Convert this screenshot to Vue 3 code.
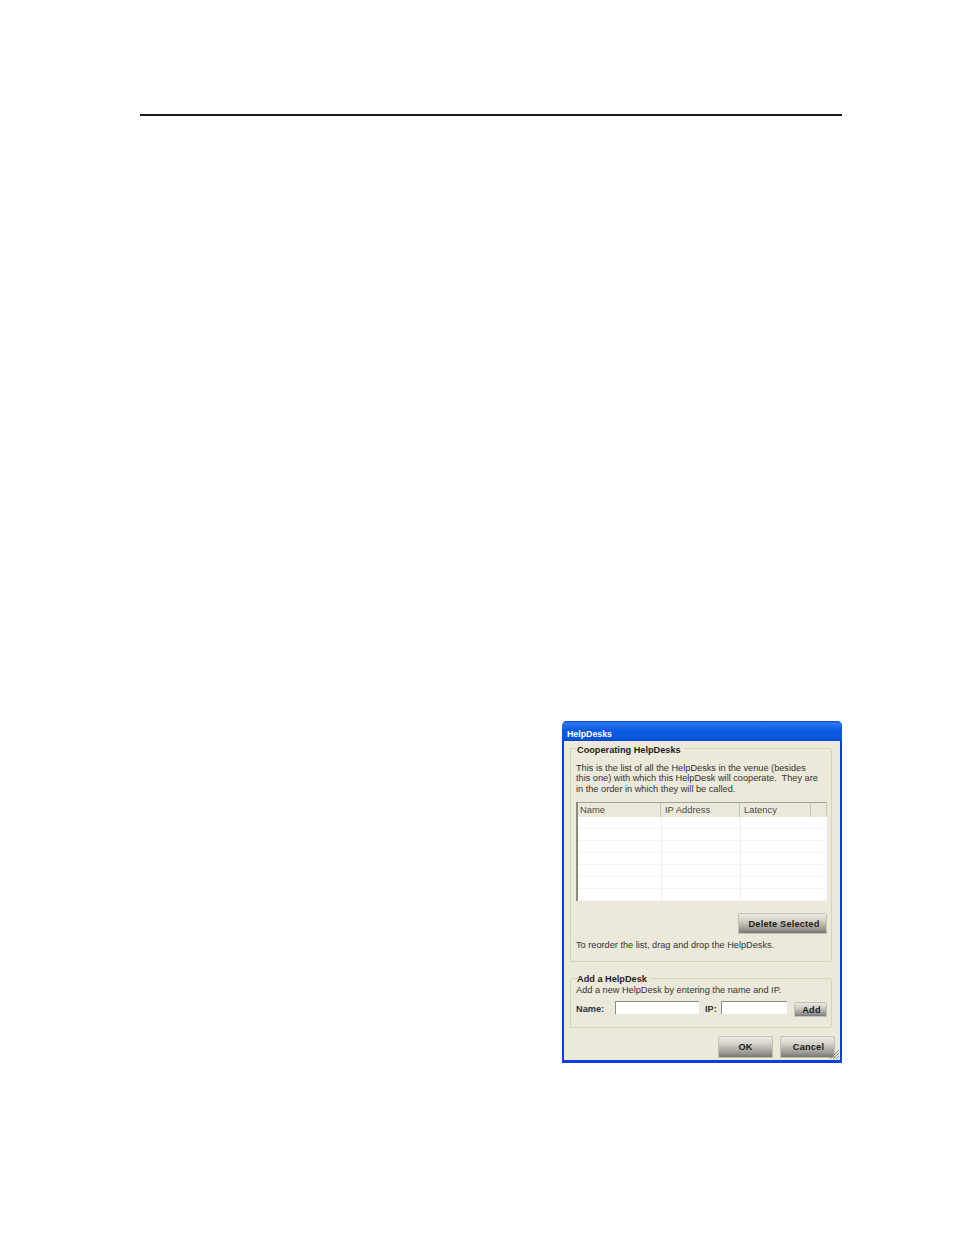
<script setup>
const columns = [
  { name: 'Name', width: 83 },
  { name: 'IP Address', width: 79 },
  { name: 'Latency', width: 71 },
  { name: '', width: 16 }
]
const rows = [1, 2, 3, 4, 5, 6, 7]
</script>

<template>
  <div class="page">
    <div class="rule"></div>
    <div class="window">
      <div class="titlebar">HelpDesks</div>
      <div class="body">
        <fieldset class="group first">
          <legend>Cooperating HelpDesks</legend>
          <p class="intro">
            This is the list of all the HelpDesks in the venue (besides<br>
            this one) with which this HelpDesk will cooperate.&nbsp; They are<br>
            in the order in which they will be called.
          </p>
          <div class="table">
            <div class="thead">
              <div v-for="c in columns" :key="c.name" class="th" :style="{ width: c.width + 'px' }">{{ c.name }}</div>
            </div>
            <div v-for="r in rows" :key="r" class="tr">
              <div class="td col-name"></div>
              <div class="td col-ip"></div>
              <div class="td last"></div>
            </div>
          </div>
          <div class="delete-row">
            <button class="btn delete">Delete Selected</button>
          </div>
          <p class="reorder">To reorder the list, drag and drop the HelpDesks.</p>
        </fieldset>
        <fieldset class="group second">
          <legend>Add a HelpDesk</legend>
          <p class="add-text">Add a new HelpDesk by entering the name and IP.</p>
          <div class="add-row">
            <label class="name-label">Name:</label>
            <div class="input name"></div>
            <label class="ip-label">IP:</label>
            <div class="input ip"></div>
            <button class="btn add">Add</button>
          </div>
        </fieldset>
        <div class="footer">
          <button class="btn ok">OK</button>
          <button class="btn cancel">Cancel</button>
        </div>
        <svg class="grip" width="11" height="11" viewBox="0 0 11 11">
          <path d="M10 1 L1 10 M10 4 L4 10 M10 7 L7 10" stroke="#8f8c7c" stroke-width="1" fill="none" />
        </svg>
      </div>
    </div>
  </div>
</template>

<style>
html, body {
  background: #fff;
}
</style>

<style scoped>
.page {
  width: 954px;
  height: 1235px;
  padding: 114px 112px 0 140px;
  box-sizing: border-box;
  font-family: "Liberation Sans", Arial, sans-serif;
}

.rule {
  height: 2px;
  background: #1c1c1c;
}

.window {
  width: 280px;
  height: 342px;
  margin: 605px 0 0 422px;
  box-sizing: border-box;
  background: #0a3fd8;
  border-radius: 5px 5px 0 0;
  padding: 0 2px 3px;
  display: flex;
  flex-direction: column;
}

.titlebar {
  height: 20px;
  flex: none;
  padding: 3px 0 0 5px;
  margin: 0 -2px;
  box-sizing: border-box;
  color: #fff;
  font-size: 8.8px;
  font-weight: bold;
  line-height: 20px;
  background: linear-gradient(#0b4fd6, #2a78f2 12%, #0f5ae4 45%, #0b55e0 85%, #0a46d0);
  border-radius: 5px 5px 0 0;
}

.body {
  position: relative;
  flex: 1;
  background: #ece9da;
  padding: 0 8px 0 6px;
  display: flex;
  flex-direction: column;
  min-height: 0;
}

.group {
  margin: 0;
  padding: 0 5px;
  border: 1px solid #d6d2bc;
  border-radius: 2px;
  font-size: 9.2px;
  color: #333;
  min-width: 0;
  box-sizing: border-box;
}

.group legend {
  font-weight: bold;
  font-size: 9.2px;
  line-height: 11px;
  padding: 4px 3px 0 1px;
  color: #1e1e1e;
}

.first {
  height: 221px;
}

.second {
  height: 57px;
  margin-top: 9px;
}

.second legend {
  padding-top: 3px;
}

.intro {
  margin: 7px 0 0;
  line-height: 10.4px;
  white-space: nowrap;
}

.table {
  margin-top: 8px;
  width: 251px;
  box-sizing: border-box;
  border-left: 2px solid #8d8b80;
  background: #fff;
}

.thead {
  display: flex;
  height: 15px;
  box-sizing: border-box;
  background: #ece9da;
  border-top: 1px solid #a5a294;
}

.th {
  box-sizing: border-box;
  border-right: 1px solid #c9c6b4;
  padding-left: 4px;
  line-height: 14px;
  font-size: 9.4px;
  color: #4a4a4a;
}

.th:first-child {
  padding-left: 2px;
}

.tr {
  display: flex;
  height: 12px;
  border-bottom: 1px solid #f5f4ee;
  box-sizing: border-box;
}

.td {
  box-sizing: border-box;
  border-right: 1px solid #f0efe8;
}

.col-name {
  width: 84px;
}

.col-ip {
  width: 79px;
}

.td.last {
  flex: 1;
  border-right: 0;
}

.delete-row {
  display: flex;
  justify-content: flex-end;
  margin-top: 12px;
  width: 251px;
}

.btn {
  font-family: inherit;
  font-weight: bold;
  font-size: 9.2px;
  letter-spacing: 0.2px;
  color: #1e1e1e;
  border: 0;
  padding: 0;
  background: linear-gradient(#f0eee6, #d4d2c9 35%, #989690 78%, #6f6d68);
  box-shadow: inset 0 0 0 1px #c4c2b6;
  border-radius: 2px;
}

.delete {
  width: 89px;
  height: 21px;
  padding-left: 3px;
}

.reorder {
  margin: 6px 0 0;
  line-height: 11px;
}

.add-text {
  margin: 0;
  line-height: 10px;
}

.add-row {
  display: flex;
  align-items: flex-start;
  margin-top: 6px;
  width: 251px;
}

.add-row > * {
  flex: none;
}

.name-label,
.ip-label {
  font-weight: bold;
  line-height: 16px;
}

.name-label {
  width: 39px;
}

.ip-label {
  margin-left: 6px;
  width: 16px;
}

.input {
  height: 13px;
  background: #fff;
  border-top: 1px solid #8e8c80;
  border-left: 1px solid #8e8c80;
  box-sizing: border-box;
}

.input.name {
  width: 84px;
}

.input.ip {
  width: 66px;
}

.add {
  width: 33px;
  height: 15px;
  margin: 1px 0 0 7px;
  padding-left: 2px;
}

.footer {
  display: flex;
  justify-content: flex-end;
  gap: 7px;
  margin-top: 8px;
  margin-right: -3px;
}

.ok,
.cancel {
  height: 22px;
  width: 55px;
}

.cancel {
  padding-left: 2px;
}

.grip {
  position: absolute;
  right: 0;
  bottom: 0;
}
</style>
